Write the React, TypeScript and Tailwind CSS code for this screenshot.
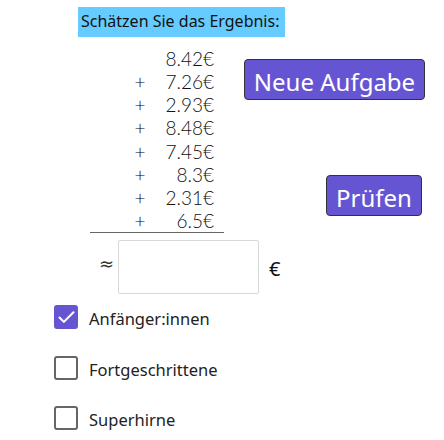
import { Check } from "lucide-react";

const numbers = ["8.42€", "7.26€", "2.93€", "8.48€", "7.45€", "8.3€", "2.31€", "6.5€"];

const levels = [
  { label: "Anfänger:innen", checked: true },
  { label: "Fortgeschrittene", checked: false },
  { label: "Superhirne", checked: false },
];

export default function App() {
  return (
    <div className="w-[444px] h-[440px] bg-white text-black overflow-hidden font-['Noto_Sans',sans-serif]">
      {/* Header */}
      <div className="pt-[7px] pl-[78px]">
        <div className="w-[207px] h-[30px] bg-[#66ccff] px-[3px] text-[16px] leading-[29px] text-[#111]">
          Schätzen Sie das Ergebnis:
        </div>
      </div>

      {/* Sum + buttons */}
      <div className="flex mt-[10px]">
        <div className="w-[224px] shrink-0">
          {numbers.map((n, i) => (
            <div key={i} className="flex h-[23.15px] items-center font-['Lato',sans-serif] font-light text-[19px] leading-[23px] text-[#111]">
              <span className="ml-[132px] w-[16px] text-center text-black">{i > 0 ? "+" : ""}</span>
              <span className="flex-1 text-right pr-[10px]">{n}</span>
            </div>
          ))}
          <div className="ml-[90px] w-[134px] h-px bg-[#666]" />
        </div>
        <div className="flex flex-col">
          <button className="ml-[20px] mt-[12px] w-[181px] h-[41px] pt-[5px] rounded-[4px] border border-[#333] bg-[#6655d3] text-white text-[24px] leading-none">
            Neue Aufgabe
          </button>
          <button className="ml-[102px] mt-[75px] w-[96px] h-[41px] pt-[5px] rounded-[4px] border border-[#333] bg-[#6655d3] text-white text-[24px] leading-none">
            Prüfen
          </button>
        </div>
      </div>

      {/* Answer */}
      <div className="flex items-center mt-[7px]">
        <span className="ml-[99px] w-[19px] text-[18px] text-[#333] font-['DejaVu_Sans',sans-serif] -mt-[8px]">≈</span>
        <div className="w-[141px] h-[54px] border border-[#d8d8d8] rounded-[2px]" />
        <span className="ml-[10px] mt-[3px] text-[20px] text-[#111]">€</span>
      </div>

      {/* Levels */}
      <div className="mt-[11px] ml-[54px] flex flex-col gap-[26.5px]">
        {levels.map((l) => (
          <label key={l.label} className="flex items-center gap-[11px] h-[24px]">
            {l.checked ? (
              <span className="w-[24px] h-[24px] rounded-[3px] bg-[#6655d3] flex items-center justify-center">
                <Check className="w-[21px] h-[21px] text-white" strokeWidth={2.4} />
              </span>
            ) : (
              <span className="w-[24px] h-[24px] rounded-[3px] border-2 border-[#666]" />
            )}
            <span className="text-[16.5px] text-[#222] mt-[5px]">{l.label}</span>
          </label>
        ))}
      </div>
    </div>
  );
}
